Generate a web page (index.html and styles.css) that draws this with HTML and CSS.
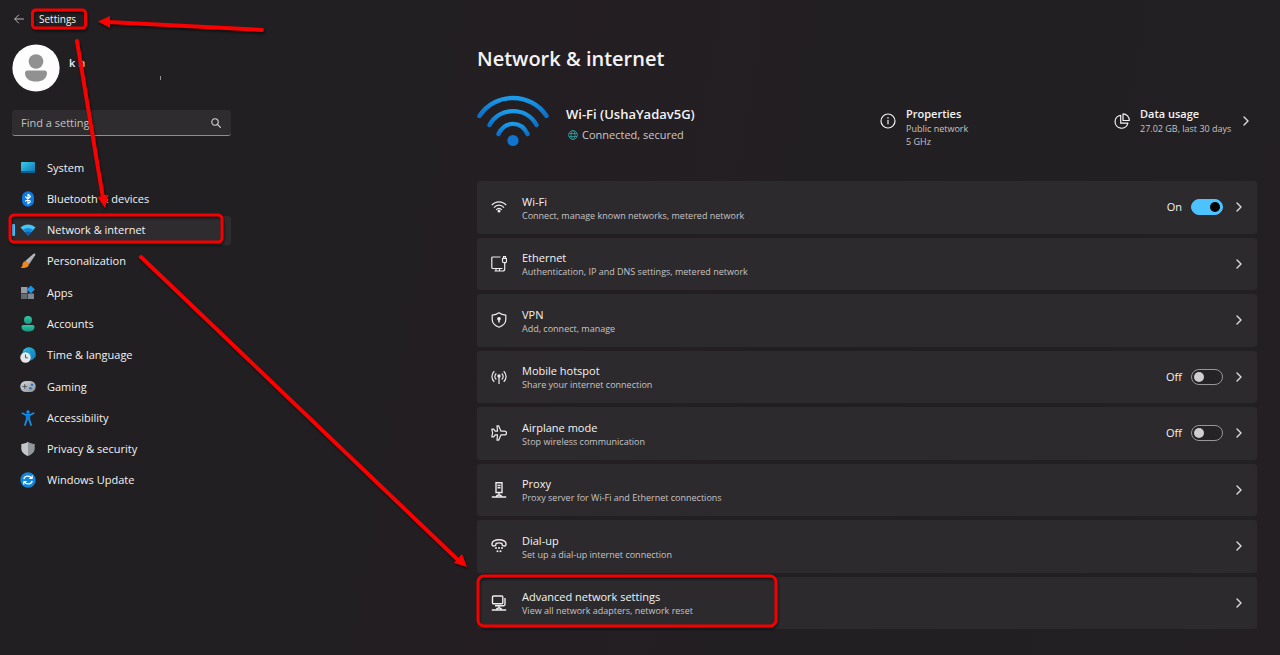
FILE: index.html
```html
<!DOCTYPE html>
<html lang="en">
<head>
<meta charset="utf-8">
<title>Settings</title>
<meta name="viewport" content="width=device-width, initial-scale=1">
<link rel="stylesheet" href="styles.css">
</head>
<body>
<svg class="defs" aria-hidden="true">
  <defs>
    <symbol id="chevron" viewBox="0 0 8 12"><path d="M2 2l4 4-4 4" fill="none" stroke="currentColor" stroke-width="1.4" stroke-linecap="round" stroke-linejoin="round"/></symbol>
    <linearGradient id="cyan" x1="0" y1="0" x2="1" y2="1"><stop offset="0" stop-color="#3ad0ea"/><stop offset="1" stop-color="#0b6fae"/></linearGradient>
    <linearGradient id="teal" x1="0" y1="0" x2="0" y2="1"><stop offset="0" stop-color="#2fc9a6"/><stop offset="1" stop-color="#17937b"/></linearGradient>
    <linearGradient id="grey" x1="0" y1="0" x2="1" y2="1"><stop offset="0" stop-color="#d4d8dc"/><stop offset="1" stop-color="#8c9298"/></linearGradient>
    <linearGradient id="wifi" x1="0" y1="0" x2="0" y2="1"><stop offset="0" stop-color="#1b9ae8"/><stop offset="1" stop-color="#0c6fc8"/></linearGradient>
  </defs>
</svg>

<div class="app">
  <aside class="sidebar">
    <header class="titlebar">
      <button class="back" type="button" aria-label="Back"><svg width="10" height="10" viewBox="0 0 10 10"><path d="M9.500 5H.8M4.600 1L.7 5l3.900 4" fill="none" stroke="currentColor" stroke-linecap="round" stroke-linejoin="round"/></svg></button>
      <span>Settings</span>
    </header>
    <div class="account">
      <svg class="avatar" viewBox="0 0 48 48"><circle cx="24" cy="24" r="23.600" fill="#fdfdfd"/><circle cx="24" cy="17.500" r="7.300" fill="#919191"/><path d="M15.500 26.500h17a2.500 2.500 0 0 1 2.500 2.500c0 6-5 8.500-11 8.500S13 35 13 29a2.500 2.500 0 0 1 2.500-2.500z" fill="#919191"/></svg>
      <span class="account-name">k h</span>
      <span class="account-mark"></span>
    </div>
    <div class="search">
      <input type="text" placeholder="Find a setting" aria-label="Find a setting">
      <button type="button" aria-label="Search"><svg width="10" height="10" viewBox="0 0 10 10"><circle cx="4" cy="4" r="3.200" fill="none" stroke="currentColor" stroke-width="1.100"/><path d="M6.400 6.400l3 3" stroke="currentColor" stroke-width="1.200" stroke-linecap="round"/></svg></button>
    </div>
    <nav class="nav">
      <a href="#system"><svg viewBox="0 0 16 16"><rect x="1" y="2" width="14" height="11" rx="1" fill="url(#cyan)"/><path d="M1 11h14v1a1 1 0 0 1-1 1H2a1 1 0 0 1-1-1z" fill="#0a5f91"/></svg>System</a>
      <a href="#bluetooth"><svg viewBox="0 0 16 16"><rect x="2" y="0.200" width="12" height="15.600" rx="6" fill="#0d7be6"/><path d="M5.300 5.500l5.200 5L8 12.800V3.200l2.500 2.300-5.200 5" fill="none" stroke="#fff" stroke-width="1.100" stroke-linejoin="round"/></svg>Bluetooth &amp; devices</a>
      <a href="#network" class="active" aria-current="page"><svg viewBox="0 0 16 16"><path d="M.5 5.500C4.500 1.500 11.500 1.500 15.500 5.500L8 13.500z" fill="#45c6f5"/><path d="M2.700 8C6 5.200 10 5.200 13.300 8L8 13.500z" fill="#168bd9"/><path d="M5 10.400C7 9.200 9 9.200 11 10.400L8 13.500z" fill="#0a5fae"/></svg>Network &amp; internet</a>
      <a href="#personalization"><svg viewBox="0 0 16 16"><path d="M13.500.8c1.500-.8 2.300 0 1.700 1.400L9 11.500 5.300 8z" fill="url(#grey)"/><path d="M5.200 8.200c1.900.1 3.400 1.400 3.600 3.200-.3 3.300-4.800 4-8.300 3.300 2-.9 1.700-1.900 2-3.400.4-1.800 1.200-3 2.700-3.100z" fill="#f0871c"/></svg>Personalization</a>
      <a href="#apps"><svg viewBox="0 0 16 16"><path d="M1 2h6.500v6H1z" fill="#949ba2"/><path d="M1 8.500h6.500V14H1z" fill="#626a72"/><path d="M8 8.500h6V14H8z" fill="#80878e"/><path d="M10.900.5l4 4-4 4-4-4z" fill="#1c95e5"/></svg>Apps</a>
      <a href="#accounts"><svg viewBox="0 0 16 16"><circle cx="8" cy="4" r="4" fill="url(#teal)"/><path d="M3.500 9h9c1.400 0 2 .8 2 2 0 3-2.500 4.500-6.500 4.500S1.500 14 1.500 11c0-1.200.6-2 2-2z" fill="url(#teal)"/></svg>Accounts</a>
      <a href="#time"><svg viewBox="0 0 16 16"><circle cx="9" cy="7" r="6.800" fill="url(#cyan)"/><path d="M2.500 5h13M3 9h13M9 .2c-4 4-4 9 0 13.500M9 .2c4 4 4 9 0 13.500" fill="none" stroke="#1689c8" stroke-width=".7"/><circle cx="5.500" cy="10.500" r="5.200" fill="#e5e6e8"/><path d="M5.500 7.500v3.300h2.300" fill="none" stroke="#4e5359" stroke-width="1"/></svg>Time &amp; language</a>
      <a href="#gaming"><svg viewBox="0 0 16 16"><rect x=".3" y="2" width="15.400" height="11" rx="5.500" fill="url(#grey)"/><path d="M4.700 5.200v4.600M2.400 7.500H7" stroke="#555d66" stroke-width="1.200"/><circle cx="12" cy="5.700" r="1.300" fill="#2675c8"/><circle cx="10.500" cy="9.300" r="1.300" fill="#2675c8"/></svg>Gaming</a>
      <a href="#accessibility"><svg viewBox="0 0 16 16"><circle cx="8" cy="2" r="1.800" fill="#158fe8"/><path d="M2.500 3.200L6 5h4l3.500-1.800M6.700 5v4.500L5 15M9.300 5v4.500L11 15" fill="none" stroke="#158fe8" stroke-width="1.800" stroke-linecap="round" stroke-linejoin="round"/><path d="M6 5h4v5.500H6z" fill="#0f7fd6"/></svg>Accessibility</a>
      <a href="#privacy"><svg viewBox="0 0 16 16"><path d="M8 .8c2 1.500 4 2 6.700 2.200V7.500c0 3.800-3 6-6.700 7.500z" fill="#92979c"/><path d="M8 .8C6 2.300 4 2.800 1.300 3V7.500c0 3.800 3 6 6.700 7.500z" fill="#c3c7ca"/></svg>Privacy &amp; security</a>
      <a href="#update"><svg viewBox="0 0 16 16"><circle cx="8" cy="8" r="7.700" fill="#0f86dc"/><path d="M3.800 7.200C4.500 3.500 9.500 3 11.700 6M12.200 3.500V6.300H9.300M12.200 8.800c-.7 3.700-5.700 4.200-7.900 1.200M3.800 12.500V9.700h2.900" fill="none" stroke="#fff" stroke-width="1.200" stroke-linejoin="round"/></svg>Windows Update</a>
    </nav>
  </aside>

  <main class="content">
    <h1>Network &amp; internet</h1>
    <section class="status">
      <svg class="wifi-large" viewBox="0 0 72 54"><g fill="none" stroke="url(#wifi)" stroke-width="4.400" stroke-linecap="round"><path d="M2.500 21C18-3 54-3 69.500 21"/><path d="M12.500 30C22.500 11.500 49.500 11.500 59.500 30"/><path d="M21.500 39C28 25.500 44 25.500 50.500 39"/></g><circle cx="36" cy="45.500" r="5.600" fill="#0f75d0"/></svg>
      <div class="connection">
        <h2>Wi-Fi (UshaYadav5G)</h2>
        <p><svg width="10" height="10" viewBox="0 0 10 10"><g fill="none" stroke="#2b9a96" stroke-width=".9"><circle cx="5" cy="5" r="4.400"/><ellipse cx="5" cy="5" rx="2" ry="4.400"/><path d="M1 3.500h8M1 6.500h8"/></g></svg>Connected, secured</p>
      </div>
      <a class="info properties" href="#properties">
        <svg width="16" height="16" viewBox="0 0 16 16"><circle cx="8" cy="8" r="7" fill="none" stroke="currentColor" stroke-width="1.200"/><path d="M8 7v4.200" stroke="currentColor" stroke-width="1.200"/><circle cx="8" cy="5" r=".8" fill="currentColor"/></svg>
        <span><strong>Properties</strong><small>Public network<br>5 GHz</small></span>
      </a>
      <a class="info usage" href="#usage">
        <svg width="16" height="16" viewBox="0 0 16 16"><path d="M6.700 2.300a6.500 6.500 0 1 0 7.200 7.900H6.700zM9 .8v6.700h6.300A6.500 6.500 0 0 0 9 .8z" fill="none" stroke="currentColor" stroke-width="1.200" stroke-linejoin="round"/></svg>
        <span><strong>Data usage</strong><small>27.02 GB, last 30 days</small></span>
        <svg class="chevron" viewBox="0 0 8 12"><use href="#chevron"/></svg>
      </a>
    </section>

    <ul class="list">
      <li><a href="#wifi-settings"><svg viewBox="0 0 16 16"><path d="M.8 6.200C4.500 1.800 11.500 1.800 15.200 6.200M3 8.600c2.800-3.200 7.200-3.200 10 0M5.200 10.800c1.700-1.900 3.900-1.900 5.600 0"/><circle cx="8" cy="12" r="1.500" fill="currentColor" stroke="none"/></svg><span><strong>Wi-Fi</strong><small>Connect, manage known networks, metered network</small></span></a>
        <label class="toggle">On<input type="checkbox" role="switch" checked></label><svg class="chevron" viewBox="0 0 8 12"><use href="#chevron"/></svg></li>
      <li><a href="#ethernet"><svg viewBox="0 0 16 16"><path d="M9.500 1H1.800a1 1 0 0 0-1 1v9.500a1 1 0 0 0 1 1h9.700M5 12.500V15M8.500 12.500V15M3.500 15h8.200a2 2 0 0 0 2-2V7M11.500 2.500h4v2.700a1.500 1.500 0 0 1-1.500 1.500h-1a1.500 1.500 0 0 1-1.500-1.500zM12.500 2.500V.7h2v1.800"/></svg><span><strong>Ethernet</strong><small>Authentication, IP and DNS settings, metered network</small></span></a><svg class="chevron" viewBox="0 0 8 12"><use href="#chevron"/></svg></li>
      <li><a href="#vpn"><svg viewBox="0 0 16 16"><path d="M8 .8c2 1.500 4 2.200 6.800 2.400v4.300c0 4-2.800 6.200-6.800 7.700-4-1.500-6.800-3.700-6.800-7.700V3.200C4 3 6 2.300 8 .8z"/><circle cx="8" cy="6.700" r="1.200" fill="currentColor"/><path d="M8 7v3.500" stroke-width="1.500"/></svg><span><strong>VPN</strong><small>Add, connect, manage</small></span></a><svg class="chevron" viewBox="0 0 8 12"><use href="#chevron"/></svg></li>
      <li><a href="#hotspot"><svg viewBox="0 0 16 16"><path d="M3.300 2.300c-3.200 3-3.200 7.500 0 10.400M12.700 2.300c3.200 3 3.200 7.500 0 10.400M5.300 4.500c-2 1.800-2 4.300 0 6M10.700 4.500c2 1.800 2 4.300 0 6M8 7.500V15"/><circle cx="8" cy="7" r="1.100" fill="currentColor"/></svg><span><strong>Mobile hotspot</strong><small>Share your internet connection</small></span></a>
        <label class="toggle">Off<input type="checkbox" role="switch"></label><svg class="chevron" viewBox="0 0 8 12"><use href="#chevron"/></svg></li>
      <li><a href="#airplane"><svg viewBox="0 0 16 16"><path d="M6 .8h1.600L10 6.200h3.700a1.800 1.800 0 0 1 0 3.600H10l-2.400 5.400H6L6.500 9.800H4.200L2.700 11.800H.8L1.600 8 .8 4.200h1.900l1.500 2h2.300z" stroke-linejoin="round"/></svg><span><strong>Airplane mode</strong><small>Stop wireless communication</small></span></a>
        <label class="toggle">Off<input type="checkbox" role="switch"></label><svg class="chevron" viewBox="0 0 8 12"><use href="#chevron"/></svg></li>
      <li><a href="#proxy"><svg viewBox="0 0 16 16"><path d="M5 .8h6v9.700H5zM6.500 3.500h3M6.500 5.800h3M8 10.500V13M.8 15H5.500c0-1.200 1-2 2.500-2s2.500.8 2.500 2h4.700M5.500 15h5" stroke-width="1.400"/></svg><span><strong>Proxy</strong><small>Proxy server for Wi-Fi and Ethernet connections</small></span></a><svg class="chevron" viewBox="0 0 8 12"><use href="#chevron"/></svg></li>
      <li><a href="#dialup"><svg viewBox="0 0 16 16"><path d="M1 6.500C.2.200 15.800.2 15 6.500c-.2 1.700-1 1.700-2.500 1.400-1.300-.2-1.600-.8-1.600-2.400-1.800-.8-4-.8-5.800 0 0 1.600-.3 2.200-1.600 2.400C2 8.200 1.200 8.200 1 6.500z" stroke-width="1.400" stroke-linejoin="round"/><g fill="currentColor" stroke="none"><circle cx="5" cy="10" r="1"/><circle cx="8" cy="10" r="1"/><circle cx="11" cy="10" r="1"/><circle cx="6.500" cy="13.200" r="1"/><circle cx="9.500" cy="13.200" r="1"/></g></svg><span><strong>Dial-up</strong><small>Set up a dial-up internet connection</small></span></a><svg class="chevron" viewBox="0 0 8 12"><use href="#chevron"/></svg></li>
      <li><a href="#advanced"><svg viewBox="0 0 16 16"><path d="M2.500 1h8.300a1 1 0 0 1 1 1v5.800a1 1 0 0 1-1 1H2.500a1 1 0 0 1-1-1V2a1 1 0 0 1 1-1zM14 3v6.300a1.500 1.500 0 0 1-1.500 1.500H4M8 10.800V13M.8 15H5.500c0-1.200 1-2 2.500-2s2.500.8 2.500 2h4.700M5.500 15h5" stroke-width="1.400"/></svg><span><strong>Advanced network settings</strong><small>View all network adapters, network reset</small></span></a><svg class="chevron" viewBox="0 0 8 12"><use href="#chevron"/></svg></li>
    </ul>
  </main>
</div>

<svg class="annotations" width="1280" height="655" viewBox="0 0 1280 655" aria-hidden="true">
  <g fill="none" stroke="#f40000" stroke-width="3">
    <rect x="32.500" y="10" width="53" height="18" rx="3"/>
    <rect x="10" y="215" width="212" height="27" rx="4"/>
    <rect x="478" y="576" width="298" height="50" rx="6"/>
  </g>
  <g stroke="#fb0000" stroke-width="4" stroke-linecap="round">
    <path d="M262 30L108 22"/><path d="M77 41L103 198"/><path d="M141 257L458 560"/>
  </g>
  <g fill="#fb0000">
    <path d="M98 21.500L110 16v12z"/><path d="M105 208l-7.500-11 11-2z"/><path d="M467 567l-13-4 8-9z"/>
  </g>
</svg>
</body>
</html>
```

FILE: styles.css
```css
* { box-sizing: border-box; }

body {
  margin: 0;
  min-height: 100vh;
  position: relative;
  color: #f4f3f4;
  font: 11px/14px "Open Sans", "Noto Sans", sans-serif;
  background: linear-gradient(100deg, #211f21 0%, #211f21 30%, #241e22 42%, #221f22 60%, #231f22 100%);
}

h1, h2, p, ul { margin: 0; padding: 0; }
a { color: inherit; text-decoration: none; }
button { padding: 0; border: 0; background: none; color: inherit; display: flex; }
svg { display: block; flex: none; }

.defs { position: absolute; width: 0; height: 0; }

.app { display: flex; gap: 246px; padding: 0 23px 26px 12px; }

/* Sidebar */
.sidebar { flex: none; width: 219px; }

.titlebar {
  display: flex;
  align-items: center;
  gap: 15px;
  height: 38px;
  padding-left: 2px;
  font-size: 10px;
}

.back { color: #b8b6b8; }

.account { display: flex; align-items: center; height: 60px; }
.avatar { width: 48px; height: 48px; }
.account-name { width: 91px; margin-left: 9px; padding-bottom: 10px; font-weight: 600; }
.account-mark { width: 1px; height: 4px; margin-top: 20px; background: #949294; }

.search {
  display: flex;
  align-items: center;
  height: 26px;
  margin-top: 12px;
  padding: 0 10px 0 9px;
  border-radius: 3px;
  border-bottom: 1px solid #8f8d8f;
  background: #2e2c2e;
  color: #d8d6d8;
}
.search input {
  flex: 1;
  min-width: 0;
  padding: 0;
  border: 0;
  outline: 0;
  background: none;
  color: inherit;
  font: inherit;
}
.search input::placeholder { color: #c4c2c4; opacity: 1; }

.nav {
  display: grid;
  grid-auto-rows: 1fr;
  min-height: 344px;
  margin-top: 16px;
}
.nav a {
  display: flex;
  align-items: center;
  gap: 11px;
  margin: 1px 0;
  padding-left: 8px;
  border-radius: 3px;
}
.nav svg { width: 16px; height: 16px; }
.nav .active { padding-left: 0; background: #2e2c2e; }
.nav .active::before {
  content: "";
  width: 3px;
  height: 12px;
  margin-right: -6px;
  border-radius: 1px;
  background: #4cc2ff;
}

/* Main column */
.content { flex: 1; min-width: 0; padding-top: 44px; }

h1 { font-size: 20px; line-height: 30px; font-weight: 600; }

.status { display: flex; height: 107px; padding-top: 21px; }
.wifi-large { width: 72px; height: 54px; }
.connection { flex: 1; margin-left: 17px; padding-top: 10px; }
h2 { font-size: 13px; line-height: 18px; font-weight: 600; }
.connection p {
  display: flex;
  align-items: center;
  gap: 4px;
  padding: 5px 0 0 2px;
  color: #cbc9cb;
}

strong, small { display: block; }
small { font-size: 9px; line-height: 13px; color: #c6c4c6; }
strong { font-weight: 400; }

.info { display: flex; align-items: flex-start; gap: 10px; padding-top: 10px; }
.info > svg { margin-top: 8px; }
.info strong { line-height: 17px; font-weight: 600; }
.properties { width: 234px; }
.usage { width: 143px; padding-right: 7px; }
.info { flex: none; }

.chevron { width: 8px; height: 12px; color: #dddbdd; }
.usage .chevron { margin: 10px 0 0 auto; }

.list {
  display: grid;
  grid-auto-rows: 1fr;
  gap: 4px;
  min-height: 448px;
  list-style: none;
}
.list li {
  display: flex;
  align-items: center;
  gap: 12px;
  padding-right: 14px;
  border-radius: 3px;
  background: #2d2a2d;
}
.list a {
  display: flex;
  flex: 1;
  align-items: center;
  gap: 15px;
  padding-left: 14px;
}
.list span { padding-top: 2px; }
.list a svg {
  width: 16px;
  height: 16px;
  fill: none;
  stroke: #eeecee;
  stroke-width: 1.2;
  color: #eeecee;
}

.toggle { display: flex; align-items: center; gap: 9px; }
.toggle input {
  appearance: none;
  display: flex;
  align-items: center;
  width: 32px;
  height: 16px;
  margin: 0;
  padding: 0 2px;
  border: 1px solid #989698;
  border-radius: 8px;
  background: #252325;
}
.toggle input::before {
  content: "";
  width: 10px;
  height: 10px;
  border-radius: 50%;
  background: #cfcdcf;
}
.toggle input:checked {
  justify-content: flex-end;
  border-color: #4cc2ff;
  background: #4cc2ff;
}
.toggle input:checked::before { background: #000; }

/* Arrows and outlines drawn over the window */
.annotations {
  position: absolute;
  top: 0;
  left: 0;
  max-width: 100%;
  pointer-events: none;
  filter: drop-shadow(1px 2px 1px rgba(0, 0, 0, 0.5));
}
```
